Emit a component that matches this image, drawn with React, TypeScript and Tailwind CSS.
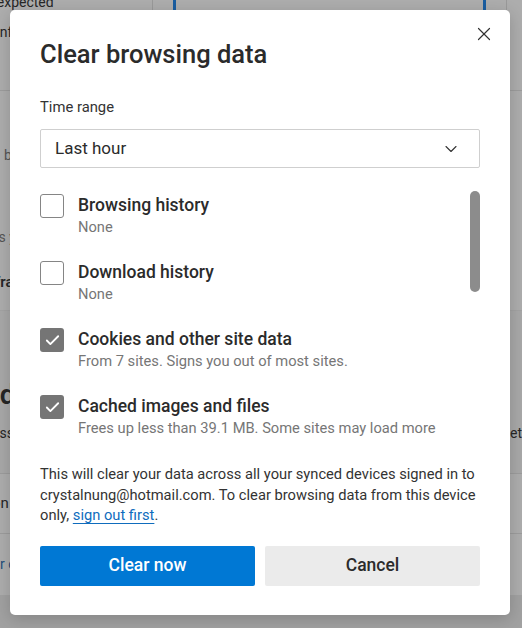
import { Check, X, ChevronDown } from "lucide-react";

const items = [
  { label: "Browsing history", note: "None", checked: false },
  { label: "Download history", note: "None", checked: false },
  { label: "Cookies and other site data", note: "From 7 sites. Signs you out of most sites.", checked: true },
  { label: "Cached images and files", note: "Frees up less than 39.1 MB. Some sites may load more", checked: true },
  { label: "Passwords", note: "None", checked: false },
];

function Backdrop() {
  // the settings page behind the dialog, dimmed
  return (
    <div className="flex flex-col text-[#262626]">
      <div className="h-[90px] flex">
        <div className="w-[152px] flex flex-col text-[14px] leading-[20px]">
          <span className="-mt-[8px] -ml-[20px]">Unexpected</span>
          <span className="mt-[10px] -ml-[4px]">Info</span>
        </div>
        <div className="w-[355px] h-[10px] border-x border-[#999] flex justify-between px-[20px]">
          <div className="w-[3px] bg-[#1a5da0]" />
          <div className="w-[3px] bg-[#1a5da0]" />
        </div>
      </div>
      <div className="h-[220px] border-t border-[#9c9c9c] flex flex-col text-[14px] leading-[20px]">
        <span className="mt-[54px] ml-[4px] text-[#555]">by</span>
        <span className="mt-[62px] -ml-[9px] text-[#555]">as you</span>
        <span className="mt-[25px] -ml-[5px] font-semibold text-[15px]">fram</span>
      </div>
      <div className="h-[163px] bg-[#a8a8a8] border-t border-[#a3a3a3] flex flex-col">
        <span className="mt-[68px] -ml-[16px] text-[28px] leading-[32px] font-semibold">nd.</span>
        <div className="mt-[12px] flex justify-between text-[14px] leading-[20px]">
          <span className="-ml-[8px]">ess</span>
          <span>set</span>
        </div>
      </div>
      <div className="h-[60px] border-t border-[#9c9c9c] flex items-center">
        <span className="-ml-[8px] text-[15px]">on</span>
      </div>
      <div className="h-[62px] border-t border-[#9c9c9c] flex items-center">
        <span className="-ml-[8px] text-[14px] text-[#1f4d7a]">or c</span>
      </div>
      <div className="h-[40px] bg-[#a1a1a1]" />
    </div>
  );
}

function Row({ label, note, checked }: { label: string; note: string; checked: boolean }) {
  return (
    <div className="flex gap-[14px] h-[67px] shrink-0">
      <div
        className={`w-[24px] h-[24px] mt-[1px] shrink-0 rounded-[3px] flex items-center justify-center ${
          checked ? "bg-[#757575]" : "border border-[#858585] bg-white"
        }`}
      >
        {checked && <Check size={17} strokeWidth={2.6} className="text-white" />}
      </div>
      <div className="flex flex-col">
        <span className="text-[17.5px] leading-[26px] font-medium text-[#2b2b2b] -mt-[1px]">{label}</span>
        <span className="text-[14.7px] leading-[18px] text-[#767676]">{note}</span>
      </div>
    </div>
  );
}

export default function App() {
  return (
    <div className="relative w-[522px] h-[628px] overflow-hidden bg-[#adadad] font-['Segoe_UI',Roboto,sans-serif]">
      <Backdrop />
      <div className="absolute left-[10px] top-[10px] w-[500px] h-[605px] bg-white rounded-[5px] shadow-[0_4px_16px_rgba(0,0,0,0.18)] flex flex-col px-[30px]">
        <button className="absolute right-[15px] top-[13px] text-[#333]">
          <X size={22} strokeWidth={1.3} />
        </button>
        <h1 className="mt-[27px] text-[25.5px] leading-[34px] font-medium text-[#2b2b2b]">Clear browsing data</h1>
        <p className="mt-[26px] text-[14.8px] leading-[20px] text-[#333]">Time range</p>
        <div className="mt-[12px] h-[39px] border border-[#cfcfcf] rounded-[2px] flex items-center justify-between pl-[14px] pr-[18px]">
          <span className="text-[17px] text-[#2b2b2b]">Last hour</span>
          <ChevronDown size={20} strokeWidth={1.3} className="text-[#333]" />
        </div>
        <div className="mt-[23px] h-[255px] flex gap-[4px] overflow-hidden">
          <div className="flex-1 flex flex-col overflow-hidden pt-[2px]">
            {items.map((it) => (
              <Row key={it.label} {...it} />
            ))}
          </div>
          <div className="w-[10px] h-[101px] rounded-full bg-[#8c8c8c] shrink-0" />
        </div>
        <p className="mt-[18px] text-[14.7px] leading-[20.5px] text-[#333]">
          This will clear your data across all your synced devices signed in to crystalnung@hotmail.com. To clear
          browsing data from this device only,{" "}
          <a className="text-[#0f6cbd] underline underline-offset-[3px] decoration-[#0f6cbd]">sign out first</a>.
        </p>
        <div className="mt-[20px] flex gap-[10px]">
          <button className="flex-1 h-[40px] rounded-[2px] bg-[#0078d4] text-white text-[17.5px] font-medium">
            Clear now
          </button>
          <button className="flex-1 h-[40px] rounded-[2px] bg-[#ebebeb] text-[#2b2b2b] text-[17.5px] font-medium">
            Cancel
          </button>
        </div>
      </div>
    </div>
  );
}
